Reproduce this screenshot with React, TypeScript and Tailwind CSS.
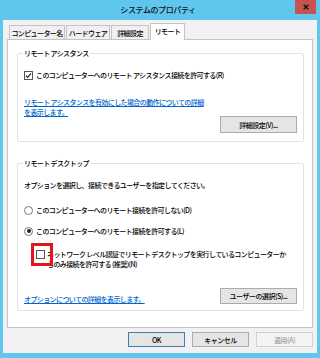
import React from "react";

function CheckBox({ checked }: { checked?: boolean }) {
  return (
    <span className="flex h-[9px] w-[9px] shrink-0 items-center justify-center border border-[#555] bg-white">
      {checked && (
        <svg viewBox="0 0 9 9" className="h-[7px] w-[7px]">
          <path d="M1.2 4.6 L3.4 6.8 L7.8 1.8" stroke="#222" strokeWidth="1.5" fill="none" />
        </svg>
      )}
    </span>
  );
}

function Radio({ checked }: { checked?: boolean }) {
  return (
    <span className="flex h-[9px] w-[9px] shrink-0 items-center justify-center rounded-full border border-[#777] bg-white">
      {checked && <span className="h-[4px] w-[4px] rounded-full bg-[#222]" />}
    </span>
  );
}

function Btn({
  children,
  w,
  h,
  variant,
}: {
  children: React.ReactNode;
  w: string;
  h: string;
  variant?: "default" | "disabled";
}) {
  const base = "flex items-center justify-center whitespace-nowrap text-[7px] leading-[10px] tracking-[-0.5px] border";
  const v =
    variant === "default"
      ? "border-[#3c7fb1] bg-[#e5e5e5] text-[#000]"
      : variant === "disabled"
      ? "border-[#d2d2d2] bg-[#f4f4f4] text-[#a0a0a0]"
      : "border-[#acacac] bg-[#e5e5e5] text-[#000]";
  return <div className={`${base} ${v} ${w} ${h}`}>{children}</div>;
}

export default function App() {
  return (
    <div className="flex h-[358px] w-[320px] flex-col overflow-hidden bg-[#5fc6ee] font-['Noto_Sans_CJK_JP','Noto_Sans',sans-serif] font-medium text-[#000]">
      {/* title bar */}
      <div className="flex h-[20px] shrink-0">
        <div className="flex-1" />
        <div className="flex items-center whitespace-nowrap text-[8px] leading-[10px] tracking-[-0.4px] text-[#111]">
          システムのプロパティ
        </div>
        <div className="flex flex-1 items-start justify-end pr-[4px]">
          <div className="flex h-[14px] w-[21px] items-center justify-center bg-[#c75050]">
            <svg viewBox="0 0 8 8" className="h-[6px] w-[6px]">
              <path d="M1 1 L7 7 M7 1 L1 7" stroke="#111" strokeWidth="1.8" />
            </svg>
          </div>
        </div>
      </div>

      {/* body */}
      <div className="mx-[3px] mb-[5px] flex min-h-0 flex-1 flex-col bg-[#f3f0f3] px-[4px] pt-[3px] text-[7px] leading-[10px] tracking-[-0.6px]">
        {/* tabs */}
        <div className="relative z-10 flex h-[16px] shrink-0 items-end gap-[1px] whitespace-nowrap pl-[2px]">
          <div className="flex h-[14px] w-[56px] items-center justify-center border border-b-0 border-[#c4c4c4] bg-[#f0f0f0]">
            コンピューター名
          </div>
          <div className="flex h-[14px] w-[44px] items-center justify-center border border-b-0 border-[#c4c4c4] bg-[#f0f0f0]">
            ハードウェア
          </div>
          <div className="flex h-[14px] w-[38px] items-center justify-center border border-b-0 border-[#c4c4c4] bg-[#f0f0f0]">
            詳細設定
          </div>
          <div className="-mb-[1px] flex h-[17px] w-[35px] items-start justify-center border border-b-0 border-[#c4c4c4] bg-white pt-[2px]">
            リモート
          </div>
        </div>

        {/* panel */}
        <div className="shrink-0 whitespace-nowrap border border-[#c4c4c4] bg-white pb-[16px] pl-[9px] pr-[8px] pt-[8px]">
          {/* remote assistance */}
          <fieldset className="rounded-[2px] border border-[#dde3e9] px-[6px] pb-[8px]">
            <legend className="-ml-[1px] px-[1px] leading-[10px]">リモート アシスタンス</legend>
            <div className="mt-[12px] flex h-[10px] items-center gap-[3px]">
              <CheckBox checked />
              <span>このコンピューターへのリモート アシスタンス接続を許可する(R)</span>
            </div>
            <div className="mt-[17px] text-[#0066cc] underline">
              リモート アシスタンスを有効にした場合の動作についての詳細
              <br />
              を表示します。
            </div>
            <div className="-mt-[1px] flex justify-end">
              <Btn w="w-[77px]" h="h-[17px]">
                詳細設定(V)...
              </Btn>
            </div>
          </fieldset>

          {/* remote desktop */}
          <fieldset className="mt-[16px] rounded-[2px] border border-[#dde3e9] px-[6px] pb-[6px]">
            <legend className="-ml-[1px] px-[1px] leading-[10px]">リモート デスクトップ</legend>
            <div className="mt-[12px] h-[10px]">オプションを選択し、接続できるユーザーを指定してください。</div>
            <div className="mt-[15px] flex h-[10px] items-center gap-[3px]">
              <Radio />
              <span>このコンピューターへのリモート接続を許可しない(D)</span>
            </div>
            <div className="mt-[11px] flex h-[10px] items-center gap-[3px]">
              <Radio checked />
              <span>このコンピューターへのリモート接続を許可する(L)</span>
            </div>
            <div className="relative ml-[12px] mt-[13px] flex items-start gap-[2px]">
              <div className="flex h-[10px] items-center">
                <CheckBox />
              </div>
              <div>
                ネットワーク レベル認証でリモート デスクトップを実行しているコンピューターか
                <br />
                らのみ接続を許可する (推奨)(N)
              </div>
              <div className="absolute left-[-5px] top-[-6px] h-[23px] w-[22px] border-[3px] border-[#e8141b]" />
            </div>
            <div className="mt-[19px] flex items-end justify-between">
              <span className="text-[#0066cc] underline">オプションについての詳細を表示します。</span>
              <Btn w="w-[77px]" h="h-[16px]">
                ユーザーの選択(S)...
              </Btn>
            </div>
          </fieldset>
        </div>

        {/* dialog buttons */}
        <div className="mt-[4px] flex justify-end gap-[7px]">
          <Btn w="w-[57px]" h="h-[15px]" variant="default">
            OK
          </Btn>
          <Btn w="w-[57px]" h="h-[15px]">
            キャンセル
          </Btn>
          <Btn w="w-[57px]" h="h-[15px]" variant="disabled">
            適用(A)
          </Btn>
        </div>
      </div>
    </div>
  );
}
